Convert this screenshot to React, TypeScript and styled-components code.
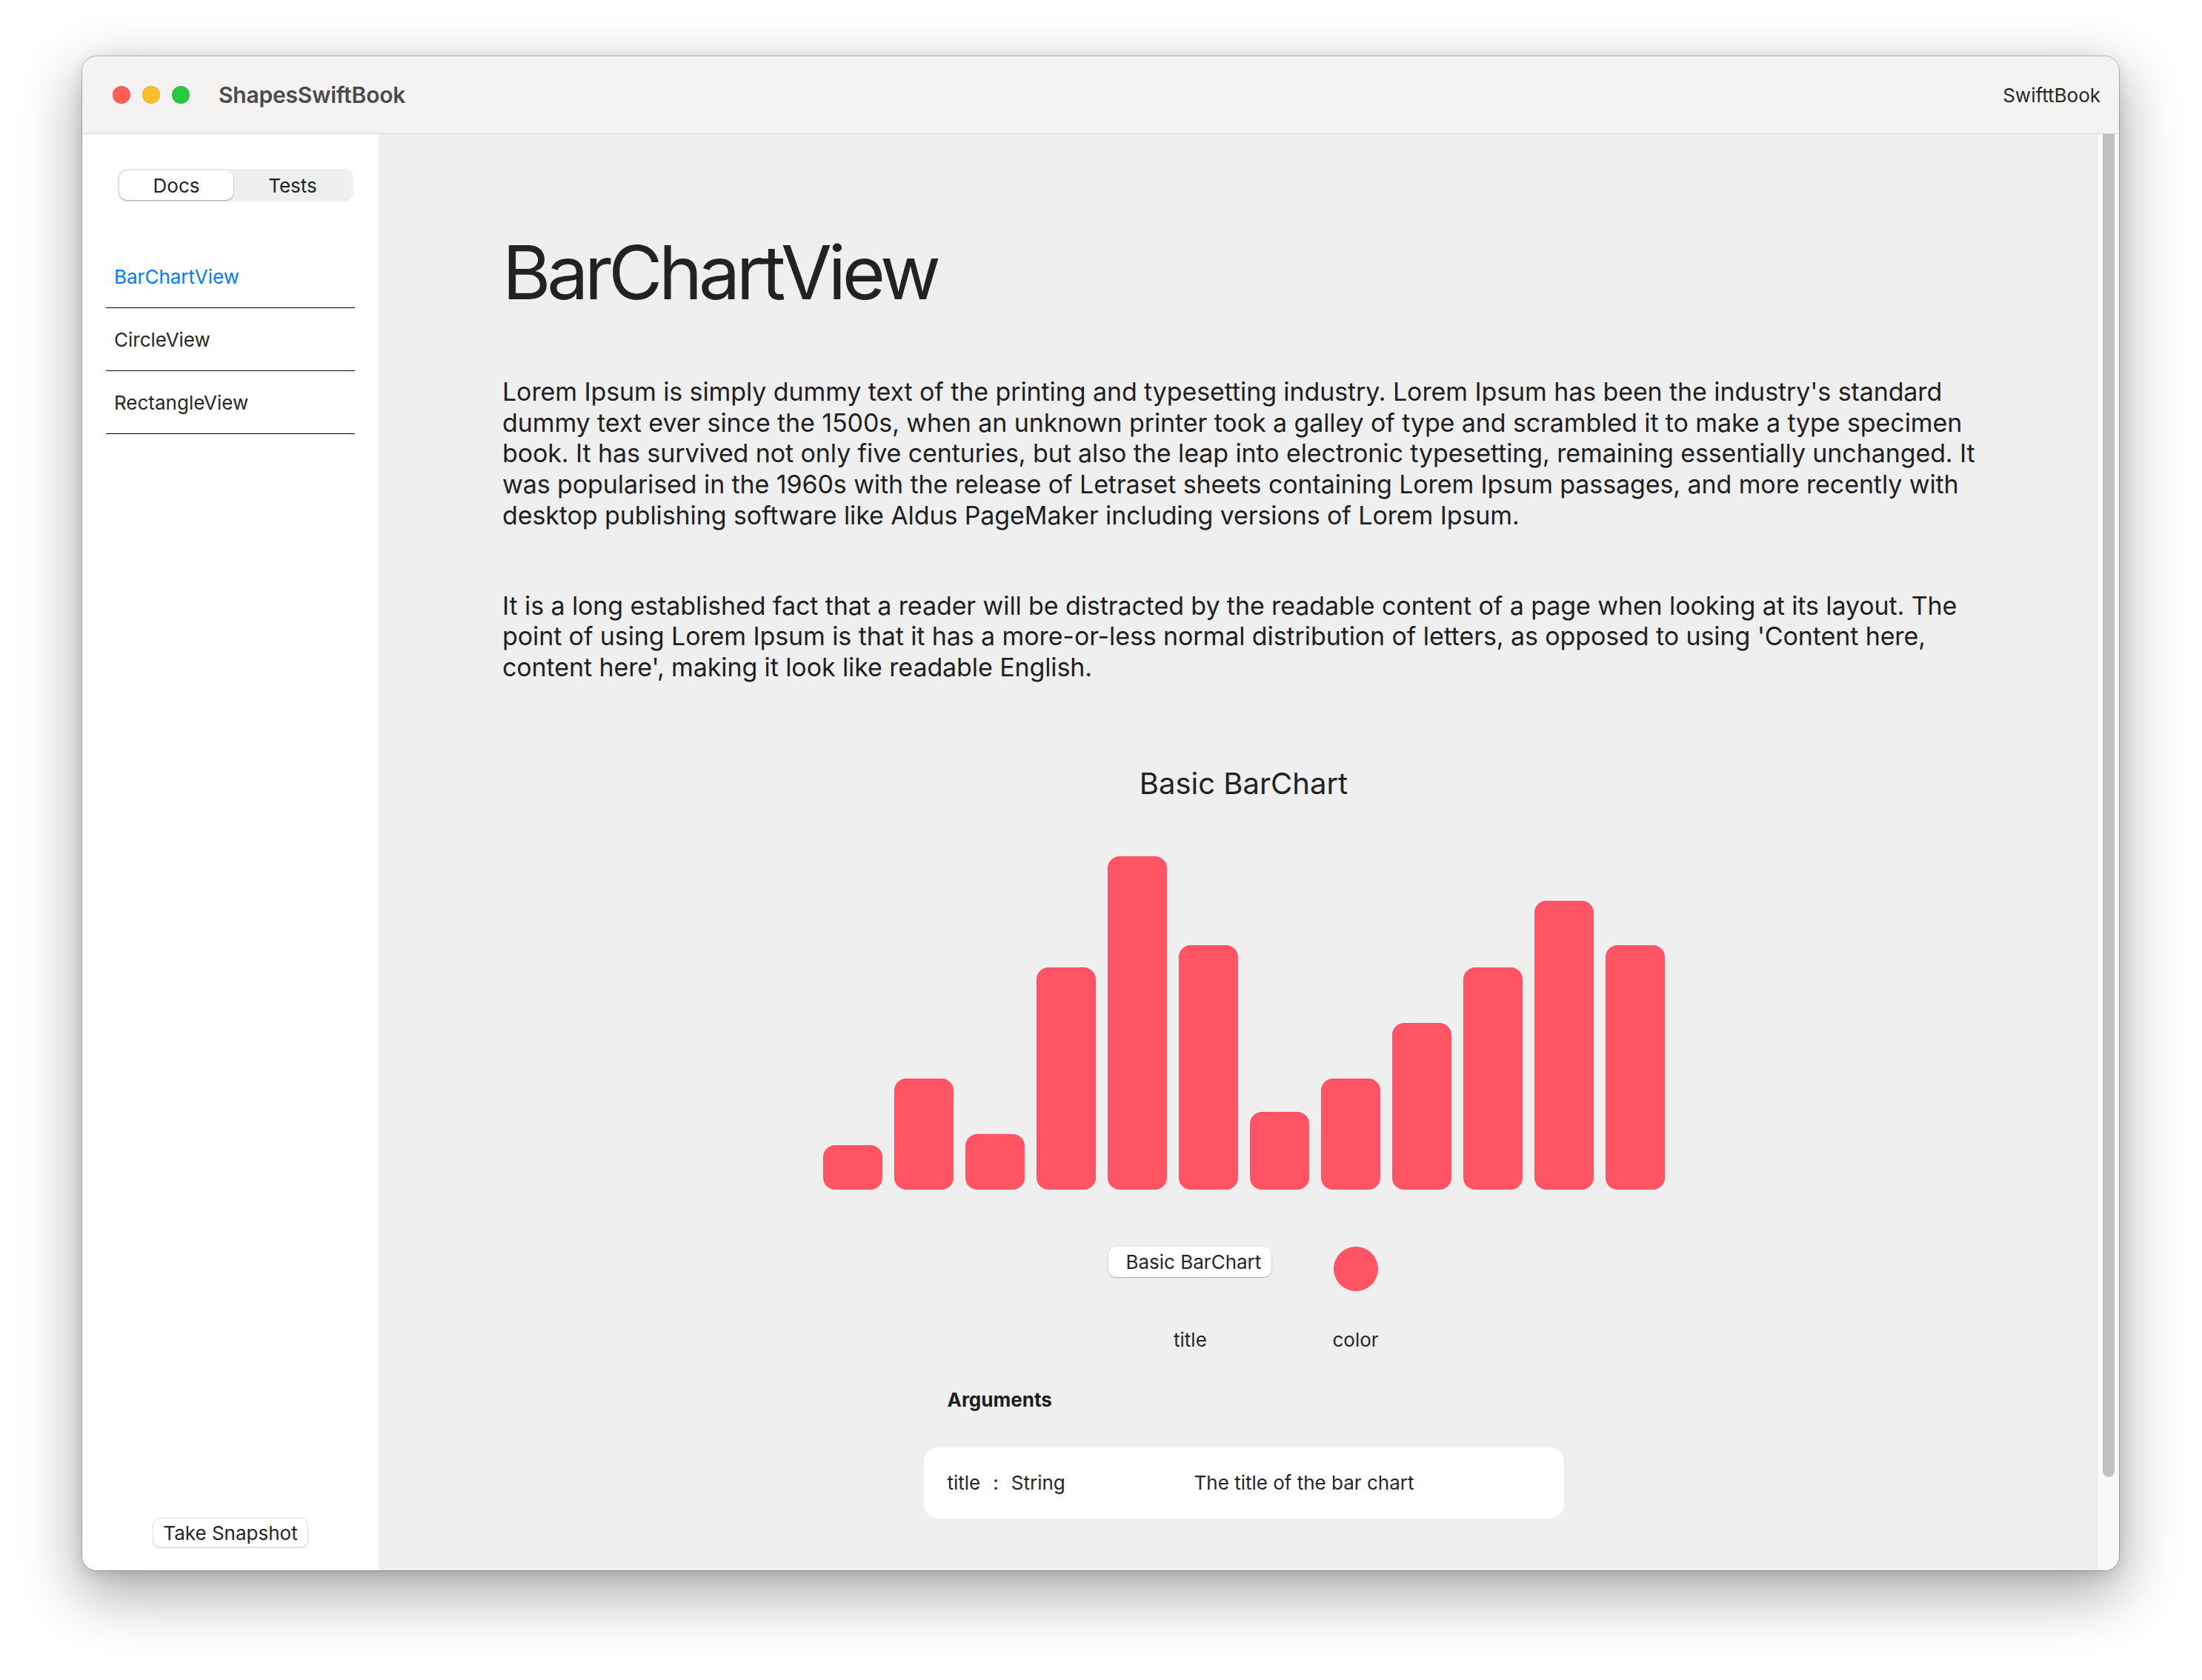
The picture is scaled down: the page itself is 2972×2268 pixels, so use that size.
import React from "react";
import styled, { createGlobalStyle } from "styled-components";

const GlobalStyle = createGlobalStyle`
  html, body {
    margin: 0;
    padding: 0;
    background: #ffffff;
    font-family: Inter, "Noto Sans", "Liberation Sans", sans-serif;
    -webkit-font-smoothing: antialiased;
  }
  * { box-sizing: border-box; }
`;

const Page = styled.div`
  width: 2972px;
  height: 2268px;
  padding: 76px 0 0 111px;
  background: #ffffff;
`;

const Window = styled.div`
  width: 2749px;
  height: 2044px;
  border-radius: 20px;
  overflow: hidden;
  display: flex;
  flex-direction: column;
  background: #efefef;
  box-shadow: 0 0 0 1px rgba(0, 0, 0, 0.22), 0 28px 80px 6px rgba(0, 0, 0, 0.32),
    0 6px 20px rgba(0, 0, 0, 0.12);
`;

const TitleBar = styled.div`
  height: 105px;
  flex-shrink: 0;
  display: flex;
  align-items: center;
  padding: 0 25px 0 41px;
  background: #f4f3f2;
  border-bottom: 1px solid #d5d5d5;
`;

const TrafficLights = styled.div`
  display: flex;
  gap: 16px;
`;

const Light = styled.span<{ $color: string }>`
  width: 24px;
  height: 24px;
  border-radius: 50%;
  background: ${(p) => p.$color};
  box-shadow: inset 0 0 0 1px rgba(0, 0, 0, 0.08);
`;

const AppTitle = styled.div`
  margin-left: 39px;
  font-size: 30px;
  font-weight: 600;
  color: #4b4b4b;
  letter-spacing: -0.2px;
`;

const Spacer = styled.div`
  flex: 1;
`;

const RightTitle = styled.div`
  font-size: 26px;
  color: #262626;
`;

const Body = styled.div`
  flex: 1;
  display: flex;
  min-height: 0;
`;

const Sidebar = styled.aside`
  width: 400px;
  flex-shrink: 0;
  background: #ffffff;
  display: flex;
  flex-direction: column;
  padding: 47px 0 31px;
`;

const Segmented = styled.div`
  margin-left: 48px;
  width: 318px;
  height: 44px;
  padding: 2px;
  border-radius: 12px;
  background: #efefef;
  display: grid;
  grid-template-columns: 154px 1fr;
`;

const Segment = styled.div<{ $active?: boolean }>`
  display: flex;
  align-items: center;
  justify-content: center;
  font-size: 26px;
  color: #222;
  border-radius: 10px;
  background: ${(p) => (p.$active ? "#ffffff" : "transparent")};
  box-shadow: ${(p) =>
    p.$active ? "0 1px 2px rgba(0,0,0,0.28), 0 0 0 0.5px rgba(0,0,0,0.08)" : "none"};
`;

const NavList = styled.nav`
  margin: 59px 0 0 32px;
  width: 336px;
  display: flex;
  flex-direction: column;
`;

const NavItem = styled.div<{ $active?: boolean }>`
  height: 85px;
  display: flex;
  align-items: center;
  padding: 0 0 0 11px;
  border-bottom: 1px solid #000;
  font-size: 26px;
  color: ${(p) => (p.$active ? "#007aff" : "#262626")};
`;

const SnapshotButton = styled.button`
  margin-top: auto;
  align-self: center;
  width: 210px;
  height: 40px;
  border-radius: 10px;
  border: 1px solid rgba(0, 0, 0, 0.1);
  background: #ffffff;
  box-shadow: 0 1px 1.5px rgba(0, 0, 0, 0.16);
  font-family: inherit;
  font-size: 26px;
  color: #262626;
  padding: 0;
`;

const Content = styled.main`
  flex: 1;
  position: relative;
  background: #efefef;
  overflow: hidden;
`;

const Scroll = styled.div`
  padding: 127px 181px 0 167px;
  display: flex;
  flex-direction: column;
  color: #222;
`;

const Heading = styled.h1`
  margin: 0;
  font-size: 100px;
  line-height: 120px;
  font-weight: 400;
  letter-spacing: -5.3px;
  color: #222;
`;

const Paragraph = styled.p`
  margin: 80px 0 0;
  font-size: 34px;
  line-height: 41.7px;
  letter-spacing: -0.1px;
  color: #1f1f1f;
`;

const ChartSection = styled.section`
  display: flex;
  flex-direction: column;
  align-items: center;
`;

const ChartTitle = styled.h2`
  margin: 112px 0 0;
  font-size: 40px;
  line-height: 48px;
  font-weight: 400;
  color: #222;
`;

const Bars = styled.div`
  margin-top: 74px;
  height: 450px;
  display: flex;
  align-items: flex-end;
  gap: 16px;
`;

const Bar = styled.div<{ $color: string }>`
  width: 80px;
  border-radius: 16px;
  background: ${(p) => p.$color};
`;

const Controls = styled.div`
  margin-top: 77px;
  display: flex;
  gap: 82px;
`;

const ControlColumn = styled.div`
  display: flex;
  flex-direction: column;
  align-items: center;
`;

const ControlSlot = styled.div`
  height: 60px;
  display: flex;
  align-items: flex-start;
`;

const TextField = styled.div`
  width: 220px;
  height: 41px;
  padding-left: 23px;
  display: flex;
  align-items: center;
  background: #ffffff;
  border-radius: 10px;
  box-shadow: 0 1px 2px rgba(0, 0, 0, 0.25), 0 0 0 0.5px rgba(0, 0, 0, 0.06);
  font-size: 26px;
  color: #262626;
`;

const Swatch = styled.div<{ $color: string }>`
  width: 60px;
  height: 60px;
  border-radius: 50%;
  background: ${(p) => p.$color};
`;

const ControlLabel = styled.div`
  margin-top: 50px;
  font-size: 26px;
  line-height: 32px;
  color: #262626;
`;

const Arguments = styled.div`
  margin-top: 49px;
  width: 864px;
  display: flex;
  flex-direction: column;
`;

const ArgumentsLabel = styled.div`
  padding-left: 32px;
  font-size: 26px;
  line-height: 32px;
  font-weight: 700;
  color: #1e1e1e;
`;

const ArgCard = styled.div`
  margin-top: 48px;
  height: 96px;
  padding: 0 32px;
  display: flex;
  align-items: center;
  background: #ffffff;
  border-radius: 20px;
  font-size: 26px;
  color: #262626;
`;

const ArgName = styled.div`
  width: 333px;
  display: flex;
  gap: 17px;
`;

const ArgDesc = styled.div``;

const ScrollTrack = styled.div`
  position: absolute;
  top: 0;
  right: 0;
  bottom: 0;
  width: 30px;
  background: #f9f9f9;
  border-left: 1px solid #e3e3e3;
`;

const ScrollThumb = styled.div`
  position: absolute;
  top: -8px;
  left: 7px;
  width: 16px;
  height: 1821px;
  border-radius: 8px;
  background: #c1c1c1;
`;

const BAR_COLOR = "#ff5464";
const data = [4, 10, 5, 20, 30, 22, 7, 10, 15, 20, 26, 22];

export default function App() {
  return (
    <>
      <GlobalStyle />
      <Page>
        <Window>
          <TitleBar>
            <TrafficLights>
              <Light $color="#ff5f57" />
              <Light $color="#febc2e" />
              <Light $color="#28c840" />
            </TrafficLights>
            <AppTitle>ShapesSwiftBook</AppTitle>
            <Spacer />
            <RightTitle>SwifttBook</RightTitle>
          </TitleBar>
          <Body>
            <Sidebar>
              <Segmented>
                <Segment $active>Docs</Segment>
                <Segment>Tests</Segment>
              </Segmented>
              <NavList>
                <NavItem $active>BarChartView</NavItem>
                <NavItem>CircleView</NavItem>
                <NavItem>RectangleView</NavItem>
              </NavList>
              <SnapshotButton>Take Snapshot</SnapshotButton>
            </Sidebar>
            <Content>
              <Scroll>
                <Heading>BarChartView</Heading>
                <Paragraph>
                  Lorem Ipsum is simply dummy text of the printing and typesetting industry. Lorem
                  Ipsum has been the industry's standard dummy text ever since the 1500s, when an
                  unknown printer took a galley of type and scrambled it to make a type specimen
                  book. It has survived not only five centuries, but also the leap into electronic
                  typesetting, remaining essentially unchanged. It was popularised in the 1960s with
                  the release of Letraset sheets containing Lorem Ipsum passages, and more recently
                  with desktop publishing software like Aldus PageMaker including versions of Lorem
                  Ipsum.
                </Paragraph>
                <Paragraph>
                  It is a long established fact that a reader will be distracted by the readable
                  content of a page when looking at its layout. The point of using Lorem Ipsum is
                  that it has a more-or-less normal distribution of letters, as opposed to using
                  'Content here, content here', making it look like readable English.
                </Paragraph>
                <ChartSection>
                  <ChartTitle>Basic BarChart</ChartTitle>
                  <Bars>
                    {data.map((v, i) => (
                      <Bar key={i} $color={BAR_COLOR} style={{ height: v * 15 }} />
                    ))}
                  </Bars>
                  <Controls>
                    <ControlColumn>
                      <ControlSlot>
                        <TextField>Basic BarChart</TextField>
                      </ControlSlot>
                      <ControlLabel>title</ControlLabel>
                    </ControlColumn>
                    <ControlColumn>
                      <ControlSlot>
                        <Swatch $color={BAR_COLOR} />
                      </ControlSlot>
                      <ControlLabel>color</ControlLabel>
                    </ControlColumn>
                  </Controls>
                  <Arguments>
                    <ArgumentsLabel>Arguments</ArgumentsLabel>
                    <ArgCard>
                      <ArgName>
                        <span>title</span>
                        <span>:</span>
                        <span>String</span>
                      </ArgName>
                      <ArgDesc>The title of the bar chart</ArgDesc>
                    </ArgCard>
                  </Arguments>
                </ChartSection>
              </Scroll>
              <ScrollTrack>
                <ScrollThumb />
              </ScrollTrack>
            </Content>
          </Body>
        </Window>
      </Page>
    </>
  );
}
